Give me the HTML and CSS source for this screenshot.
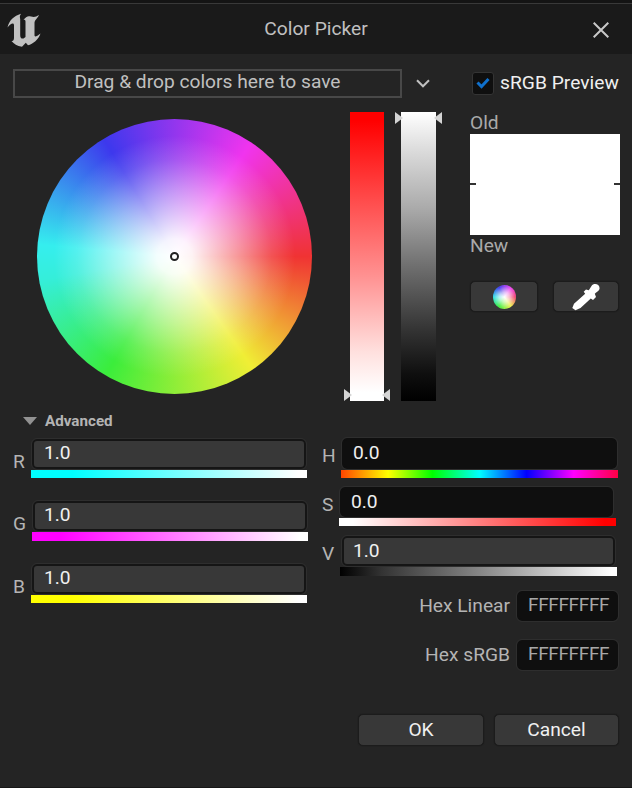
FILE: index.html
```html
<!DOCTYPE html>
<html lang="en">
<head>
<meta charset="utf-8">
<title>Color Picker</title>
<link rel="stylesheet" href="styles.css">
</head>
<body>
<main class="window">
  <header class="titlebar">
    <svg class="logo" viewBox="0 0 34 34" width="34" height="34" aria-hidden="true"><path d="M.5 14.500C2 7.500 7 3 14 .8C12.500 2.800 12.800 4 13.200 6V22C13.200 25 14.500 26 16.500 25.500L18.500 24V8.500C18.500 7 17.500 6.500 16.300 7C19 3.500 21 2.500 24 3.500C27 4.500 29 4 32 2C30.500 5.500 27.500 7 27.500 10V22C27.500 24.500 29.500 23.500 33.500 20.500C31.500 26.500 26 31 21 32.300L18.800 29.700L15 33.700C10 33 7 31 4.500 28C6.500 28.300 7 27 7 24V12.500C7 9.500 4 10 .5 14.500Z"/></svg>
    <h1 class="title">Color Picker</h1>
    <svg class="close" viewBox="0 0 16 16" width="16" height="16" aria-hidden="true"><path d="M.7 .7L15.300 15.300M15.300 .7L.7 15.300"/></svg>
  </header>

  <section class="theme-row">
    <div class="dropzone"><span>Drag &amp; drop colors here to save</span></div>
    <svg class="chevron" viewBox="0 0 14 9" width="14" height="9" aria-hidden="true"><path d="M1 1.300L7 7.300L13 1.300"/></svg>
    <label class="preview-toggle">
      <span class="checkbox"><svg viewBox="0 0 14 12" width="14" height="12"><path d="M1.500 5.500L5.500 9.500L12.500 2"/></svg></span>
      <span class="preview-text">sRGB Preview</span>
    </label>
  </section>

  <section class="picker">
    <div class="wheel"><i class="wheel-handle"></i></div>
    <div class="vbar saturation"><i class="tip left"></i><i class="tip right"></i></div>
    <div class="vbar value"><i class="tip left"></i><i class="tip right"></i></div>
    <div class="compare">
      <span class="compare-label">Old</span>
      <div class="swatch"><i></i><i></i></div>
      <span class="compare-label">New</span>
      <div class="tools">
        <button class="button tool"><i class="mini-wheel"></i></button>
        <button class="button tool eyedrop"><svg viewBox="0 0 28 28" width="28" height="28"><path d="M14 6.500L16.800 7.300L19.500 3C22 -.8 29 1.500 27.300 6.500C26.500 8.500 24 9.200 22.800 10.800L24 14L21 17L18.800 15.500L8.500 25L3.500 27.300L.3 25L2 20.800L13.200 10.700L11.700 8.800Z"/></svg></button>
      </div>
    </div>
  </section>

  <section class="advanced">
    <h2 class="advanced-title"><i></i>Advanced</h2>
    <div class="channels">
      <div class="column rgb">
        <div class="channel"><span class="name">R</span><div class="control"><div class="field">1.0</div><div class="ramp red"></div></div></div>
        <div class="channel green-row"><span class="name">G</span><div class="control"><div class="field">1.0</div><div class="ramp green"></div></div></div>
        <div class="channel"><span class="name">B</span><div class="control"><div class="field">1.0</div><div class="ramp blue"></div></div></div>
      </div>
      <div class="column hsv">
        <div class="channel hue-row"><span class="name">H</span><div class="control"><div class="field dark">0.0</div><div class="ramp hue"></div></div></div>
        <div class="channel sat-row"><span class="name">S</span><div class="control"><div class="field dark">0.0</div><div class="ramp sat"></div></div></div>
        <div class="channel val-row"><span class="name">V</span><div class="control"><div class="field">1.0</div><div class="ramp val"></div></div></div>
        <div class="hex"><span>Hex Linear</span><div class="field dark hex-field"><span>FFFFFFFF</span></div></div>
        <div class="hex"><span>Hex sRGB</span><div class="field dark hex-field"><span>FFFFFFFF</span></div></div>
      </div>
    </div>
  </section>

  <footer class="actions">
    <button class="button action">OK</button>
    <button class="button action">Cancel</button>
  </footer>
</main>
</body>
</html>
```
FILE: styles.css
```css
* { box-sizing: border-box; }
body {
  margin: 0;
  background: #242424;
  color: #c0c0c0;
  font: 19.2px/24px Roboto, sans-serif;
}
h1, h2 { margin: 0; font: inherit; }
i { display: block; }
svg { display: block; flex: none; }
.window {
  width: 632px;
  height: 788px;
  overflow: hidden;
  display: flex;
  flex-direction: column;
  border-bottom: 1px solid #171717;
}

.titlebar {
  height: 54px;
  flex: none;
  display: grid;
  grid-template-columns: 34px 1fr 34px;
  align-items: center;
  padding: 6px 6px 0 7px;
  background: linear-gradient(#141414 3px, #393939 3px, #393939 4px, #1a1a1a 4.5px);
}
.logo { fill: #c0c0c0; }
.title { text-align: center; padding: 0 1px 2px 0; }
.close { fill: none; stroke: #c8c8c8; stroke-width: 2; margin-left: 1px; }

.theme-row {
  height: 58px;
  flex: none;
  display: flex;
  align-items: center;
  padding: 0 0 0 13px;
}
.dropzone {
  width: 389px;
  height: 29px;
  border: 2px solid #484848;
  text-align: center;
  line-height: 22px;
}
.chevron { margin-left: 14px; fill: none; stroke: #c0c0c0; stroke-width: 2; }
.preview-toggle { display: flex; align-items: center; margin-left: 42px; color: #f0f0f0; }
.checkbox {
  width: 22px;
  height: 23px;
  display: grid;
  place-items: center;
  border: 1px solid #343434;
  border-radius: 3px;
  background: #0f0f0f;
}
.checkbox path { fill: none; stroke: #0f70cc; stroke-width: 3; }
.preview-text { margin-left: 6px; white-space: nowrap; padding-bottom: 1px; letter-spacing: .03px; }

.picker { height: 290px; flex: none; display: flex; padding-left: 37px; }
.wheel {
  width: 275px;
  height: 275px;
  margin-top: 7px;
  border-radius: 50%;
  display: grid;
  place-items: center;
  background:
    radial-gradient(circle, #fff 0, #fffffff0 9%, #ffffff78 34%, #ffffff28 50%, #fff0 62%),
    conic-gradient(from 90deg, #f03333, #f0ee35 55deg, #3bed3b 120deg, #35eeda 170deg, #35eeee 185deg, #3d38ed 239deg, #f034ee 304deg, #f03333);
}
.wheel-handle { width: 9px; height: 9px; border: 2px solid #222; border-radius: 50%; }
.vbar { position: relative; width: 34px; height: 289px; margin-left: 38px; }
.saturation { background: linear-gradient(#f00 3%, #ff4a4a 30%, #ff9292 57%, #ffe0de 83%, #fff 97%); }
.value { width: 35px; margin-left: 17px; background: linear-gradient(#fff, #dcdcdc 13%, #ababab 33%, #707070 53%, #323232 76%, #0e0e0e 91%, #000); }
.tip { position: absolute; width: 8px; height: 12px; background: #d4d4d4; }
.saturation .tip { bottom: 0; }
.value .tip { top: 0; }
.tip.left { left: -6px; clip-path: polygon(0 0, 100% 50%, 0 100%); }
.tip.right { right: -6px; clip-path: polygon(100% 0, 0 50%, 100% 100%); }
.compare { width: 150px; margin-left: 34px; display: flex; flex-direction: column; }
.compare-label { height: 22px; line-height: 21px; color: #aaa; }
.swatch { height: 101px; display: flex; justify-content: space-between; align-items: center; background: #fff; }
.swatch i { width: 6px; height: 2px; margin-bottom: 1px; background: #333; }
.tools { display: flex; gap: 15px; margin-top: 24px; }
.button {
  height: 31px;
  padding: 0;
  border: 1px solid #1c1c1c;
  border-radius: 5px;
  background: #383838;
  box-shadow: 0 0 1px #111;
  color: #f0f0f0;
  font: inherit;
  line-height: 29px;
}
.tool { width: 68px; display: grid; place-items: center; }
.tool.eyedrop { width: 66px; }
.eyedrop svg { fill: #fff; }
.mini-wheel {
  width: 23px;
  height: 24px;
  border-radius: 50%;
  background:
    radial-gradient(circle, #fff 0, #ffffffa0 30%, #fff0 65%),
    conic-gradient(from 90deg, #f04775, #eeee55 55deg, #43ef43 120deg, #37dfe8 180deg, #443fed 240deg, #ed4cf0 304deg, #f04775);
}

.advanced { height: 311px; flex: none; }
.advanced-title {
  height: 36px;
  display: flex;
  align-items: center;
  gap: 8px;
  padding: 2px 0 0 23px;
  font-size: 15.200px;
  font-weight: 700;
  color: #b4b4b4;
}
.advanced-title i { width: 14px; height: 8px; background: #929292; clip-path: polygon(0 0, 100% 0, 50% 100%); }
.channels { display: flex; }
.column { display: flex; flex-direction: column; }
.rgb { width: 320px; padding-top: 1px; }
.channel { display: flex; height: 62.300px; }
.name { width: 18px; margin: 11px 0 0 13px; color: #b4b4b4; }
.control { width: 276px; }
.green-row .control { margin-left: 1px; }
.field {
  height: 30px;
  margin: 0 1px;
  padding-left: 10px;
  border: 2px solid #151515;
  outline: 1px solid #2e2e2e;
  border-radius: 5px;
  background: #383838;
  color: #f0f0f0;
  line-height: 23px;
}
.green-row .field { padding-left: 9px; }
.field.dark { background: #0f0f0f; border-color: #0f0f0f; }
.ramp { height: 8px; margin-top: 1px; }
.red { background: linear-gradient(90deg, #0ff 15%, #fff 97%); }
.green { height: 9px; background: linear-gradient(90deg, #f0f 10%, #fff 97%); }
.blue { background: linear-gradient(90deg, #ff0 15%, #fff 97%); }
.hue { background: linear-gradient(90deg, #ff4500, #ff0 17%, #0f0 33%, #0ff 50%, #00f 67%, #f0f 84%, #f04); }
.sat { background: linear-gradient(90deg, #fff 5%, #f00 96%); }
.val { height: 9px; background: linear-gradient(90deg, #000, #333 15%, #858585 50%, #fff 98%); }
.hsv .channel { height: 49px; }
.hsv .hue-row { height: 49px; }
.hsv .hue-row .field { height: 31px; line-height: 25px; padding-left: 9px; }
.hsv .sat-row .field { line-height: 25px; padding-left: 9px; }
.hsv .name { width: 19px; margin: 5px 0 0 2px; line-height: 25px; }
.hsv .control { width: 277px; }
.hsv .sat-row .control { margin-left: -2px; }
.hsv .val-row .control { margin-left: -1px; }
.hsv .sat-row .field { margin-right: 3px; }
.hsv .val-row { height: 55px; }
.hsv .val-row .field { margin: 0 2px; padding-left: 9px; line-height: 25px; }
.hex {
  width: 298px;
  height: 49px;
  display: flex;
  justify-content: flex-end;
  gap: 7px;
  line-height: 29px;
  color: #b4b4b4;
}
.hex-field { width: 101px; margin: 0; padding: 0 6px 0 9px; }
.hex-field span { display: block; font-size: 19px; letter-spacing: -.35px; color: #a8a8a8; line-height: 23px; }

.actions { display: flex; justify-content: flex-end; gap: 10px; padding: 1px 13px 0 0; }
.action { width: 126px; height: 32px; padding-bottom: 2px; }
.action + .action { width: 125px; }
```
